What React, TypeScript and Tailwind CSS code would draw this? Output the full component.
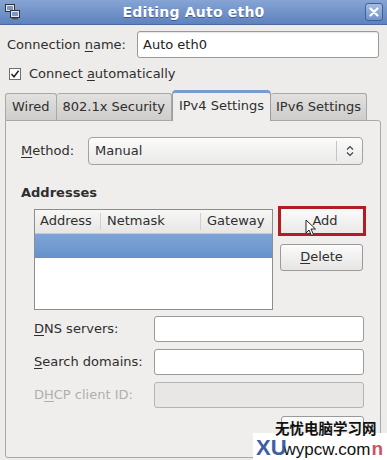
import React from "react";

const U = ({ children }: { children: React.ReactNode }) => <span className="underline underline-offset-2">{children}</span>;

export default function App() {
  return (
    <div
      className="relative w-[387px] h-[460px] overflow-hidden bg-[#edeceb] text-[13px] text-[#2e2e2e]"
      style={{ fontFamily: '"DejaVu Sans", "Noto Sans", sans-serif' }}
    >
      {/* Title bar */}
      <div className="relative h-[25px] flex items-center justify-center bg-gradient-to-b from-[#86a4d4] to-[#5f82be] border-b border-[#4a6aa3]">
        <svg className="absolute left-[5px] top-[4px]" width="16" height="16" viewBox="0 0 16 16">
          <rect x="0.5" y="0.5" width="9" height="7" fill="#dfe8f5" stroke="#333" />
          <rect x="2" y="2" width="6" height="4" fill="#7d98c4" />
          <rect x="5.5" y="6.5" width="9" height="7" fill="#dfe8f5" stroke="#333" />
          <rect x="7" y="8" width="6" height="4" fill="#7d98c4" />
          <rect x="7" y="14" width="6" height="1.5" fill="#555" />
        </svg>
        <span className="font-bold text-[14px] text-white tracking-[0.2px]" style={{ textShadow: "0 1px 0 #3d5c92" }}>
          Editing Auto eth0
        </span>
        <div className="absolute right-[4px] top-[3px] w-[18px] h-[18px] rounded-[3px] border border-[#3f5f98] bg-gradient-to-b from-[#a5bde3] to-[#7393c8] flex items-center justify-center">
          <svg width="10" height="10" viewBox="0 0 10 10">
            <path d="M1.5 1.5 L8.5 8.5 M8.5 1.5 L1.5 8.5" stroke="#fff" strokeWidth="2.2" strokeLinecap="round" />
          </svg>
        </div>
      </div>

      <div className="px-[5px]">
        {/* Connection name */}
        <div className="mt-[6px] flex items-center h-[27px]">
          <span className="pl-[2px]">
            Connection <U>n</U>ame:
          </span>
          <div className="ml-auto mr-[3px] w-[242px] h-[27px] rounded-[3px] border border-[#9a9a9a] bg-white flex items-center pl-[5px] text-[#222] shadow-[inset_0_1px_1px_rgba(0,0,0,0.1)]">
            Auto eth0
          </div>
        </div>

        {/* Checkbox */}
        <div className="mt-[8px] flex items-center h-[16px] pl-[4px]">
          <div className="w-[12px] h-[12px] border border-[#6e6e6e] bg-white flex items-center justify-center">
            <svg width="10" height="10" viewBox="0 0 10 10">
              <path d="M1.5 5 L4 7.8 L8.6 1.8" stroke="#222" strokeWidth="1.5" fill="none" />
            </svg>
          </div>
          <span className="ml-[8px]">
            Connect <U>a</U>utomatically
          </span>
        </div>

        {/* Tabs */}
        <div className="mt-[7px] flex items-end h-[31px]">
          <div className="h-[27px] px-[6px] flex items-center border border-[#a8a8a8] border-b-0 rounded-t-[3px] bg-gradient-to-b from-[#e2e1df] to-[#cfcdcb]">Wired</div>
          <div className="h-[27px] px-[6px] flex items-center border border-[#a8a8a8] border-b-0 border-l-0 rounded-t-[3px] bg-gradient-to-b from-[#e2e1df] to-[#cfcdcb]">802.1x Security</div>
          <div className="relative z-10 h-[31px] px-[6px] flex items-center border border-[#9c9c9c] border-b-0 border-t-[3px] border-t-[#7a9bd1] rounded-t-[4px] bg-[#efeeed] -mb-[1px] pb-[3px]">
            IPv4 Settings
          </div>
          <div className="h-[27px] px-[5px] flex items-center border border-[#a8a8a8] border-b-0 border-l-0 rounded-t-[3px] bg-gradient-to-b from-[#e2e1df] to-[#cfcdcb]">IPv6 Settings</div>
        </div>

        {/* Panel */}
        <div className="w-[376px] h-[338px] border border-[#a8a8a8] rounded-b-[3px] rounded-tr-[3px] bg-[#efeeed] pt-[16px]">
          {/* Method */}
          <div className="flex items-center pl-[15px] pr-[17px]">
            <span className="w-[67px]">
              <U>M</U>ethod:
            </span>
            <div className="flex-1 h-[28px] rounded-[4px] border border-[#a2a2a2] bg-gradient-to-b from-[#fbfbfb] to-[#ebeae9] flex items-center">
              <span className="pl-[6px] flex-1">Manual</span>
              <div className="w-[26px] h-[20px] border-l border-[#c4c4c4] flex items-center justify-center">
                <svg width="8" height="12" viewBox="0 0 8 12">
                  <path d="M1 4.5 L4 1.5 L7 4.5 M1 7.5 L4 10.5 L7 7.5" stroke="#444" strokeWidth="1.2" fill="none" />
                </svg>
              </div>
            </div>
          </div>

          {/* Addresses */}
          <div className="mt-[18px] pl-[15px] font-bold">Addresses</div>
          <div className="mt-[6px] pl-[28px] flex items-start">
            <div className="w-[239px] h-[101px] border border-[#8d8d8d] bg-white">
              <div className="h-[24px] flex items-center bg-gradient-to-b from-[#f7f7f6] to-[#e7e6e5] border-b border-[#c9c9c9]">
                <div className="w-[66px] pl-[5px] border-r border-[#cfcfcf] h-[17px] flex items-center">Address</div>
                <div className="w-[100px] pl-[6px] border-r border-[#cfcfcf] h-[17px] flex items-center">Netmask</div>
                <div className="flex-1 pl-[6px] h-[17px] flex items-center">Gateway</div>
              </div>
              <div className="h-[24px] bg-gradient-to-b from-[#7ea4d6] to-[#6592cb]" />
            </div>
            <div className="ml-[5px] flex flex-col -mt-[3px]">
              <div className="relative w-[88px] h-[30px] border-[3px] border-[#b31c22]">
                <div className="w-full h-full bg-gradient-to-b from-[#fbfbfb] to-[#eae9e8] flex items-center justify-center">
                  <span className="pl-[6px]">Add</span>
                </div>
                <svg className="absolute left-[24px] top-[10px]" width="12" height="18" viewBox="0 0 12 18">
                  <path d="M1 1 L1 14 L4 11 L6.5 16.5 L8.5 15.5 L6 10 L10.5 10 Z" fill="#fff" stroke="#222" strokeWidth="1" strokeLinejoin="round" />
                </svg>
              </div>
              <div className="mt-[8px] ml-[2px] w-[83px] h-[27px] rounded-[3px] border border-[#9a9a9a] bg-gradient-to-b from-[#fbfbfb] to-[#e6e5e4] flex items-center justify-center">
                <span>
                  <U>D</U>elete
                </span>
              </div>
            </div>
          </div>

          {/* Fields */}
          <div className="mt-[6px] pl-[28px] pr-[16px] flex flex-col gap-[7px]">
            <div className="flex items-center h-[26px]">
              <span className="w-[120px]">
                <U>D</U>NS servers:
              </span>
              <div className="flex-1 h-[26px] rounded-[3px] border border-[#9a9a9a] bg-white" />
            </div>
            <div className="flex items-center h-[26px]">
              <span className="w-[120px]">
                <U>S</U>earch domains:
              </span>
              <div className="flex-1 h-[26px] rounded-[3px] border border-[#9a9a9a] bg-white" />
            </div>
            <div className="flex items-center h-[26px] text-[#b0afae]">
              <span className="w-[120px]">
                D<U>H</U>CP client ID:
              </span>
              <div className="flex-1 h-[26px] rounded-[3px] border border-[#b4b4b4] bg-[#e8e7e6]" />
            </div>
            <div className="flex justify-end">
              <div className="mt-[1px] w-[83px] h-[27px] rounded-[3px] border border-[#9a9a9a] bg-gradient-to-b from-[#fbfbfb] to-[#e6e5e4]" />
            </div>
          </div>
        </div>
      </div>

      {/* Watermark */}
      <div className="absolute left-[253px] top-[433px] w-[134px] h-[27px] bg-white" />
      <div
        className="absolute left-[275px] top-[418px] whitespace-nowrap text-[14.5px] font-bold text-[#111] leading-[20px]"
        style={{ fontFamily: '"Noto Sans CJK SC", sans-serif' }}
      >
        无忧电脑学习网
      </div>
      <div
        className="absolute left-[256px] top-[437px] whitespace-nowrap flex items-baseline leading-[22px]"
        style={{ fontFamily: '"Liberation Sans", sans-serif' }}
      >
        <span className="text-[22px] font-bold text-[#2a4f9a] opacity-90">XU</span>
        <span className="-ml-[3px] text-[17px] text-[#111]">wypcw.com</span>
        <span className="ml-[1px] text-[19px] font-bold text-[#c4283c] opacity-80">n</span>
      </div>
    </div>
  );
}
